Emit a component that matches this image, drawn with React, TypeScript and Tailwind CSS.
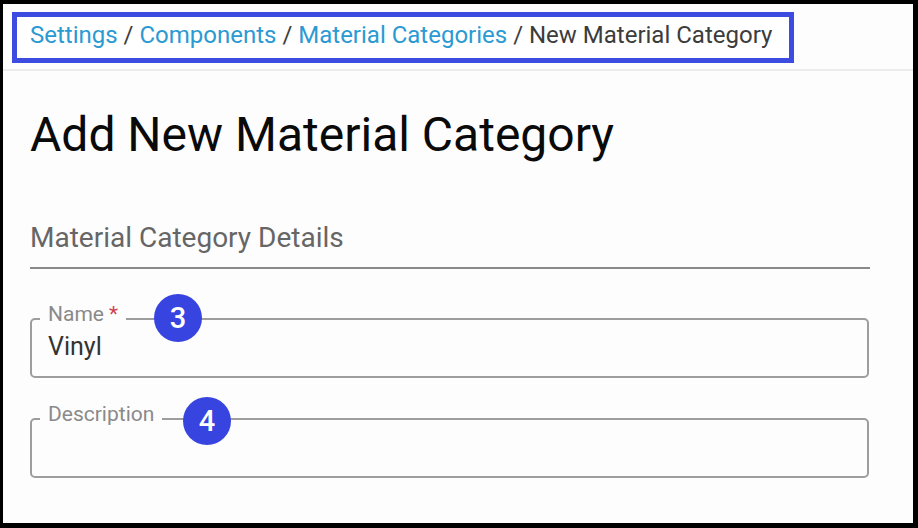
import React from "react";

const font = { fontFamily: "Roboto, 'Liberation Sans', sans-serif" };

function Badge({ n, className }: { n: number; className: string }) {
  return (
    <div
      className={`absolute flex h-[48px] w-[48px] items-center justify-center rounded-full bg-[#3744df] text-[29px] font-medium leading-none text-white ${className}`}
    >
      {n}
    </div>
  );
}

function Field({
  label,
  required,
  value,
  badge,
  badgeClass,
  className,
}: {
  label: string;
  required?: boolean;
  value?: string;
  badge: number;
  badgeClass: string;
  className: string;
}) {
  return (
    <div className={`relative w-[839px] ${className}`}>
      <fieldset className="rounded-[5px] border-2 border-[#9d9d9d] pl-[8px] pr-3 pb-[17px]">
        <legend className="px-[8px] pb-[8px] text-[21px] leading-none text-[#8a8a8a]">
          {label}
          {required && <span className="ml-[5px] text-[#d2414f]">*</span>}
        </legend>
        <div className="h-[26px] pl-[8px] pt-[1px] text-[25px] leading-none text-[#333]">
          {value}
        </div>
      </fieldset>
      <Badge n={badge} className={badgeClass} />
    </div>
  );
}

export default function App() {
  return (
    <div
      style={font}
      className="h-[528px] w-[918px] overflow-hidden border-t-4 border-l-[3px] border-r-[5px] border-b-[5px] border-black bg-[#fdfdfd]"
    >
      {/* breadcrumb */}
      <div className="border-b-2 border-[#ececec] pt-[8px] pb-[6px] pl-[9px]">
        <div className="h-[51px] w-[782px] border-[5px] border-[#3d4ce0] bg-white pl-[13px] pt-[6px] text-[24px] leading-none">
          <span className="text-[#2b9ad3]">Settings</span>
          <span className="text-[#3c3c3c]"> / </span>
          <span className="text-[#2b9ad3]">Components</span>
          <span className="text-[#3c3c3c]"> / </span>
          <span className="text-[#2b9ad3]">Material Categories</span>
          <span className="text-[#3c3c3c]"> / New Material Category</span>
        </div>
      </div>

      <div className="pl-[27px]">
        <h1 className="mt-[40px] text-[48px] leading-none text-[#0a0a0a]">Add New Material Category</h1>

        <div className="mt-[65px] w-[840px] border-b-2 border-[#8a8a8a] pb-[15px] text-[28px] leading-none text-[#666]">
          Material Category Details
        </div>

        <Field
          label="Name"
          required
          value="Vinyl"
          badge={3}
          badgeClass="left-[124px] top-[-10px]"
          className="mt-[35px]"
        />
        <Field
          label="Description"
          badge={4}
          badgeClass="left-[153px] top-[-7px]"
          className="mt-[26px]"
        />
      </div>
    </div>
  );
}
